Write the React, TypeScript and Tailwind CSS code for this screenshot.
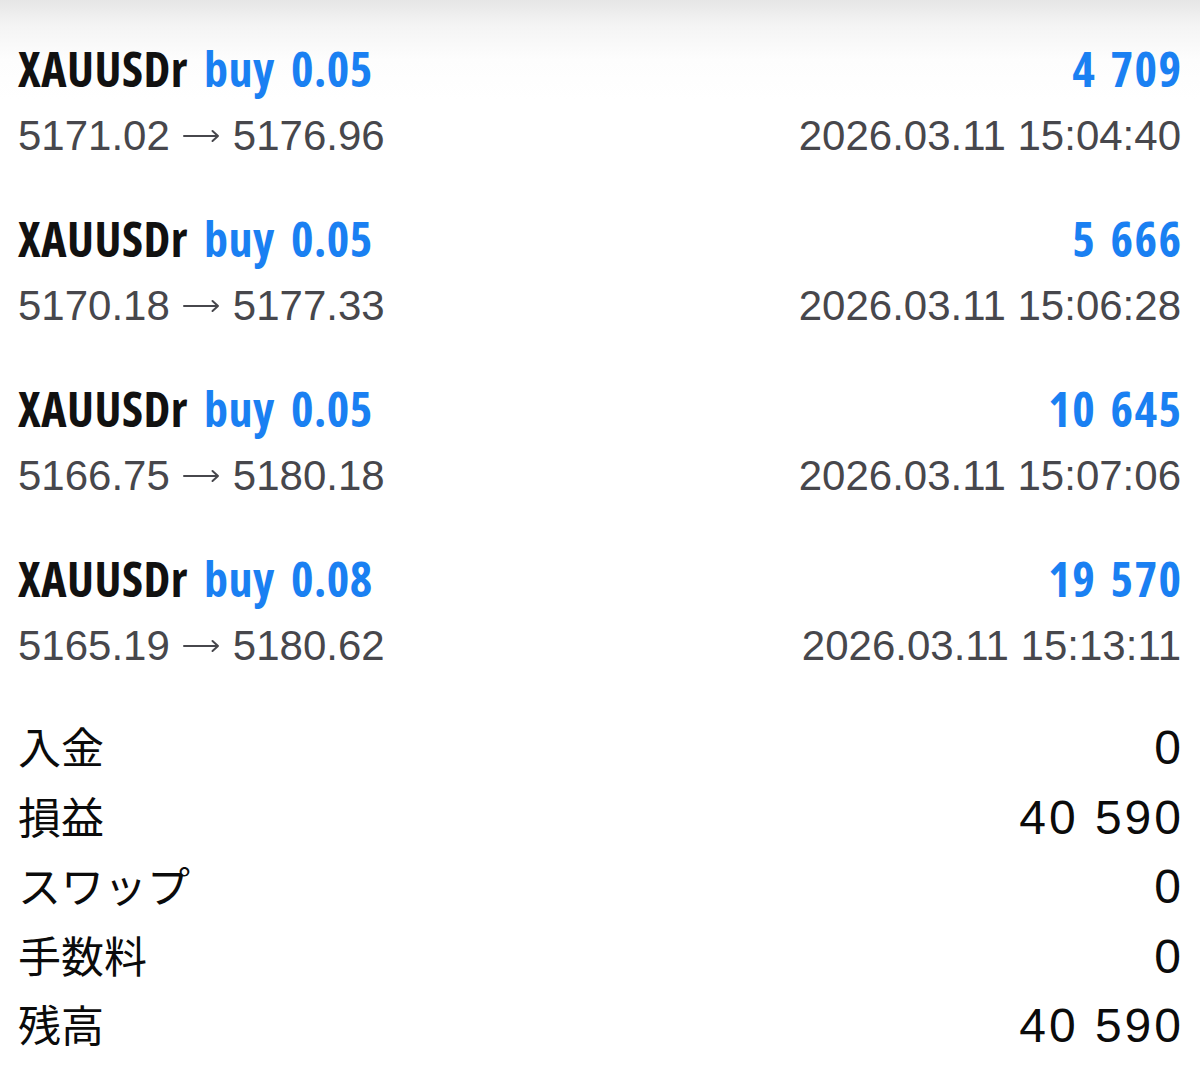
import React from "react";

type Deal = {
  symbol: string;
  side: string;
  volume: string;
  open: string;
  close: string;
  time: string;
  profit: string;
};

const deals: Deal[] = [
  { symbol: "XAUUSDr", side: "buy", volume: "0.05", open: "5171.02", close: "5176.96", time: "2026.03.11 15:04:40", profit: "4 709" },
  { symbol: "XAUUSDr", side: "buy", volume: "0.05", open: "5170.18", close: "5177.33", time: "2026.03.11 15:06:28", profit: "5 666" },
  { symbol: "XAUUSDr", side: "buy", volume: "0.05", open: "5166.75", close: "5180.18", time: "2026.03.11 15:07:06", profit: "10 645" },
  { symbol: "XAUUSDr", side: "buy", volume: "0.08", open: "5165.19", close: "5180.62", time: "2026.03.11 15:13:11", profit: "19 570" },
];

const summary = [
  { label: "入金", value: "0" },
  { label: "損益", value: "40 590" },
  { label: "スワップ", value: "0" },
  { label: "手数料", value: "0" },
  { label: "残高", value: "40 590" },
];

const narrow = "font-['Open_Sans',sans-serif] font-bold [font-stretch:75%]";
const regular = "font-['Liberation_Sans','Noto_Sans_CJK_JP',sans-serif]";

function Arrow() {
  return (
    <svg width="37" height="14" viewBox="0 0 37 14" className="mx-[13px] inline-block" fill="none">
      <path d="M1 7H35M29.5 2L35 7L29.5 12" stroke="#47474c" strokeWidth="2" strokeLinecap="round" strokeLinejoin="round" />
    </svg>
  );
}

function DealRow({ deal }: { deal: Deal }) {
  return (
    <div className="flex flex-col pt-[35px] pb-[1px]">
      <div className={`flex h-[67px] items-center justify-between text-[48px] leading-[67px] ${narrow}`}>
        <span className="tracking-[0.5px] [word-spacing:7px]">
          <span className="text-[#111111]">{deal.symbol}</span>{" "}
          <span className="text-[#1a80f2]">
            {deal.side} {deal.volume}
          </span>
        </span>
        <span className="-mr-[1.5px] tracking-[1.5px] text-[#1a80f2] [word-spacing:4px]">{deal.profit}</span>
      </div>
      <div className={`flex h-[67px] items-center justify-between text-[42px] leading-[67px] text-[#47474c] ${regular}`}>
        <span className="flex items-center">
          {deal.open}
          <Arrow />
          {deal.close}
        </span>
        <span>{deal.time}</span>
      </div>
    </div>
  );
}

export default function App() {
  return (
    <div className="h-[1070px] w-[1200px] overflow-hidden bg-[linear-gradient(to_bottom,#e6e6e6_0px,#f4f4f4_25px,#fdfdfd_60px,#ffffff_100px)] pl-[18px] pr-[19px]">
      {deals.map((d, i) => (
        <DealRow key={i} deal={d} />
      ))}
      <div className="mt-[33px] flex flex-col">
        {summary.map((row) => (
          <div key={row.label} className="flex h-[69.5px] items-center justify-between text-[#0b0b0b]">
            <span className="-mt-[4px] font-['Noto_Sans_CJK_JP',sans-serif] text-[43px] leading-[69px]">{row.label}</span>
            <span className={`-mr-[3px] text-[48px] leading-[69px] tracking-[3px] ${regular}`}>{row.value}</span>
          </div>
        ))}
      </div>
    </div>
  );
}
